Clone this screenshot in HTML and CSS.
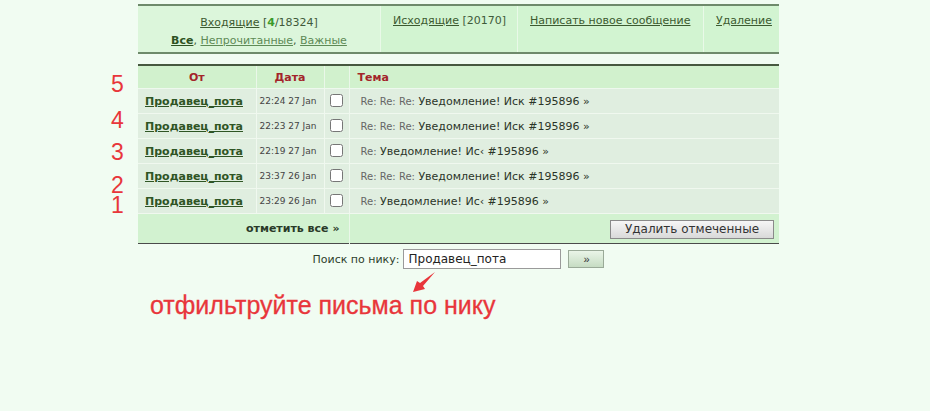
FILE: index.html
```html
<!DOCTYPE html>
<html lang="ru">
<head>
<meta charset="utf-8">
<title>Личные сообщения</title>
<link rel="stylesheet" href="styles.css">
</head>
<body>
<div class="wrap">
  <nav class="tabs">
    <div class="tab tab-first">
      <div><a href="#" class="lnk">Входящие</a> [<span class="new">4</span>/18324]</div>
      <div class="sub"><a href="#" class="lnk cur">Все</a>, <a href="#" class="lnk2">Непрочитанные</a>, <a href="#" class="lnk2">Важные</a></div>
    </div>
    <div class="tab"><a href="#" class="lnk">Исходящие</a> [20170]</div>
    <div class="tab"><a href="#" class="lnk">Написать новое сообщение</a></div>
    <div class="tab"><a href="#" class="lnk">Удаление</a></div>
  </nav>

  <div class="listbox">
    <table class="list">
      <colgroup><col class="c1"><col class="c2"><col class="c3"><col class="c4"></colgroup>
      <thead>
        <tr><th class="h-from">От</th><th class="h-date">Дата</th><th></th><th class="h-subj">Тема</th></tr>
      </thead>
      <tbody>
        <tr><td class="from"><a href="#">Продавец_пота</a></td><td class="date">22:24 27 Jan</td><td class="chk"><input type="checkbox"></td><td class="subj"><span class="re">Re: Re: Re:</span> Уведомление! Иск #195896 »</td></tr>
        <tr><td class="from"><a href="#">Продавец_пота</a></td><td class="date">22:23 27 Jan</td><td class="chk"><input type="checkbox"></td><td class="subj"><span class="re">Re: Re: Re:</span> Уведомление! Иск #195896 »</td></tr>
        <tr><td class="from"><a href="#">Продавец_пота</a></td><td class="date">22:19 27 Jan</td><td class="chk"><input type="checkbox"></td><td class="subj"><span class="re">Re:</span> Уведомление! Ис‹ #195896 »</td></tr>
        <tr><td class="from"><a href="#">Продавец_пота</a></td><td class="date">23:37 26 Jan</td><td class="chk"><input type="checkbox"></td><td class="subj"><span class="re">Re: Re: Re:</span> Уведомление! Иск #195896 »</td></tr>
        <tr><td class="from"><a href="#">Продавец_пота</a></td><td class="date">23:29 26 Jan</td><td class="chk"><input type="checkbox"></td><td class="subj"><span class="re">Re:</span> Уведомление! Ис‹ #195896 »</td></tr>
      </tbody>
      <tfoot>
        <tr><td colspan="3" class="markall">отметить все »</td><td class="delcell"><button class="btn-del">Удалить отмеченные</button></td></tr>
      </tfoot>
    </table>
    <span class="num n5">5</span>
    <span class="num n4">4</span>
    <span class="num n3">3</span>
    <span class="num n2">2</span>
    <span class="num n1">1</span>
  </div>

  <form class="search">
    <label>Поиск по нику:</label>
    <input type="text" class="nick" value="Продавец_пота">
    <button type="button" class="btn-go">»</button>
  </form>

  <div class="note">
    <span>отфильтруйте письма по нику</span>
  </div>
  <svg class="arrow" width="24" height="22" viewBox="0 0 24 22"><polygon points="23,1 11,15 13,18 1,21 5,10 8,12" fill="#e8363b"/></svg>
</div>
</body>
</html>
```
FILE: styles.css
```css
html, body { margin: 0; padding: 0; }
body {
  background: #f1fcf2;
  font-family: "DejaVu Sans", Verdana, sans-serif;
  color: #2c3a2a;
  width: 930px;
  height: 411px;
  overflow: hidden;
}
.wrap {
  position: relative;
  margin-left: 138px;
  width: 641px;
  padding-top: 4px;
}
a { color: #3a5a2c; }

.tabs {
  display: grid;
  grid-template-columns: 242px 137px 186px 76px;
  border-top: 2px solid #6e8a6b;
  border-bottom: 2px solid #6e8a6b;
  height: 46px;
  font-size: 11px;
  color: #3f5a3a;
}
.tab {
  background: #d2f4d1;
  padding: 7px 0 0 12px;
  border-left: 1px solid #e9f9e8;
  line-height: 16px;
}
.tab:first-child { border-left: none; }
.tab-first {
  background: #dcf6db;
  text-align: center;
  padding-left: 0;
  line-height: 19px;
}
.sub { margin-top: -1px; }
.lnk { color: #3c5a30; }
.new { color: #3c9a2c; font-weight: bold; }
.cur { font-weight: bold; color: #2e5222; }
.lnk2 { color: #5e8a56; }

.listbox {
  position: relative;
  margin-top: 10px;
}
.list {
  width: 641px;
  border-collapse: collapse;
  table-layout: fixed;
  border-top: 2px solid #46583f;
  border-bottom: 1px solid #4a4a4a;
}
.c1 { width: 118px; }
.c2 { width: 68px; }
.c3 { width: 25px; }
.c4 { width: 430px; }
.list th {
  background: #d1f1cd;
  color: #a3242a;
  font-size: 11px;
  height: 22px;
  padding: 0;
  border-left: 1px solid #eaf7e9;
  border-bottom: 1px solid #eef8ee;
}
.list th:first-child, .list td:first-child { border-left: none; }
.h-subj { text-align: left; padding-left: 8px !important; }
.list tbody td {
  background: #e0eee0;
  height: 24px;
  padding: 0;
  border-left: 1px solid #f0f8ef;
  border-bottom: 1px solid #f0f8ef;
  white-space: nowrap;
}
.from { padding-left: 7px !important; font-size: 11px; font-weight: bold; }
.from a { color: #2f5524; }
.date { font-size: 9px; color: #444; padding-left: 3px !important; }
.chk { text-align: center; }
.chk input { margin: -3px 0 0 0; width: 13px; height: 13px; vertical-align: middle; }
.subj { padding-left: 11px !important; font-size: 11px; color: #2b3528; }
.re { font-size: 10px; color: #666; }

.list tfoot td {
  background: #d2f2d0;
  height: 29px;
  padding: 0;
}
.markall {
  text-align: right;
  padding-right: 9px !important;
  font-size: 11px;
  font-weight: bold;
  color: #2a3a28;
  border-right: 1px solid #eaf7e9;
}
.delcell { text-align: right; padding-right: 5px !important; }
.btn-del {
  width: 164px;
  height: 19px;
  padding: 0;
  font-family: "DejaVu Sans", Verdana, sans-serif;
  font-size: 12px;
  color: #333;
  background: linear-gradient(#f6f6f6, #d9d9d9);
  border: 1px solid #8a8a8a;
  vertical-align: middle;
}

.num {
  position: absolute;
  left: -27px;
  font-family: "Liberation Sans", Arial, sans-serif;
  font-size: 23px;
  line-height: 16px;
  color: #e8363b;
}
.n5 { top: 12px; }
.n4 { top: 48px; }
.n3 { top: 80px; }
.n2 { top: 113px; }
.n1 { top: 133px; }

.search {
  display: flex;
  justify-content: center;
  align-items: center;
  margin: 5px 0 0 0;
  font-size: 11px;
  color: #2e3e2c;
}
.search label { margin-right: 4px; }
.nick {
  width: 158px;
  height: 20px;
  box-sizing: border-box;
  border: 1px solid #9a9a9a;
  padding: 0 4px;
  font-family: "DejaVu Sans", Verdana, sans-serif;
  font-size: 12px;
  color: #222;
  background: #fff;
}
.btn-go {
  margin-left: 7px;
  width: 36px;
  height: 18px;
  padding: 0;
  border: 1px solid #9aaa98;
  background: linear-gradient(#eaf5e8, #c6dcc3);
  font-size: 11px;
  color: #333;
}

.note {
  margin: 9px 0 0 12px;
  height: 42px;
}
.note span {
  display: block;
  padding-top: 12px;
  font-family: "Liberation Sans", Arial, sans-serif;
  font-size: 25px;
  line-height: 30px;
  color: #e8363b;
  -webkit-text-stroke: 0.3px #e8363b;
}
.arrow {
  position: absolute;
  left: 274px;
  top: 271px;
}
```
